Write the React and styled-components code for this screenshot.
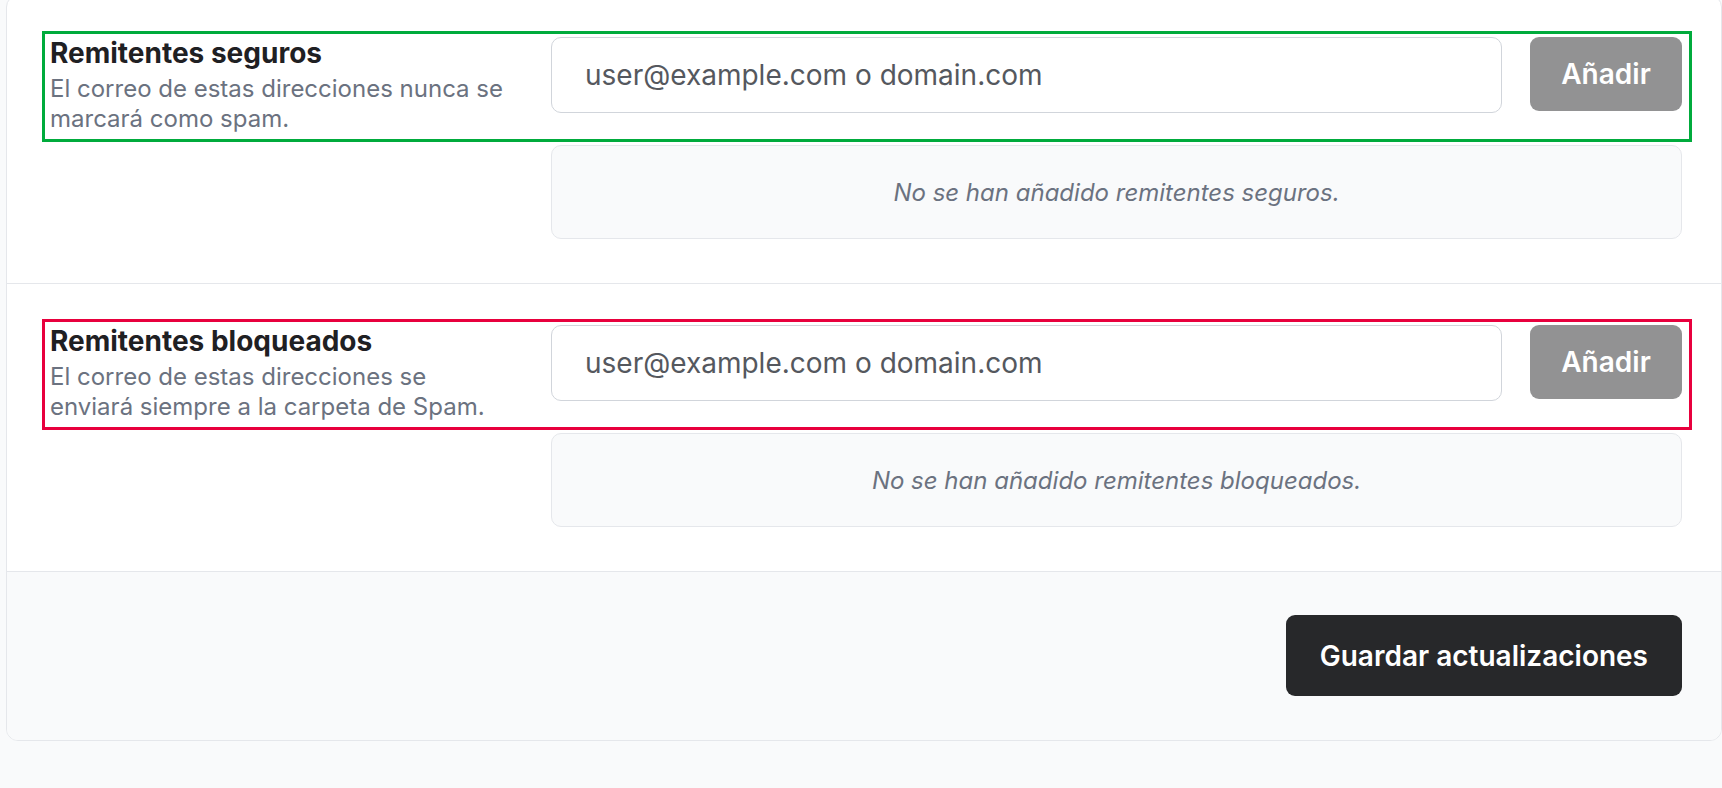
import React from "react";
import styled, { createGlobalStyle } from "styled-components";

const GlobalStyle = createGlobalStyle`
  html, body {
    margin: 0;
    padding: 0;
    background: #f9fafb;
    font-family: Inter, "Noto Sans", sans-serif;
    -webkit-font-smoothing: antialiased;
  }
  * { box-sizing: border-box; }
`;

const Page = styled.div`
  padding: 0 0 0 6px;
  min-height: 788px;
`;

const Card = styled.div`
  margin-top: -5px;
  background: #fff;
  border: 1px solid #e5e7eb;
  border-radius: 12px;
  overflow: hidden;
`;

const Section = styled.section`
  padding: 35px 29px 44px 35px;
  border-bottom: 1px solid #e5e7eb;
`;

const Row = styled.div`
  display: flex;
  align-items: flex-start;
  border: 3px solid ${(p) => p.$outline};
  padding: 3px 7px 5px 5px;
`;

const Label = styled.div`
  flex: 0 0 460px;
  margin-right: 41px;
`;

const Title = styled.h3`
  margin: 0;
  font-size: 28px;
  line-height: 32px;
  font-weight: 700;
  color: #1f2023;
`;

const Hint = styled.p`
  margin: 5px 0 0;
  font-size: 24px;
  line-height: 30px;
  color: #6b7280;
`;

const Input = styled.input`
  flex: 1;
  min-width: 0;
  height: 76px;
  padding: 0 33px;
  border: 1px solid #d1d5db;
  border-radius: 10px;
  background: #fff;
  font: 400 28px Inter, sans-serif;
  color: #1f2023;
  outline: none;

  &::placeholder {
    color: #55585e;
    opacity: 1;
  }
`;

const Button = styled.button`
  border: 0;
  border-radius: 9px;
  background: #27282a;
  color: #fff;
  font-family: Inter, sans-serif;
  font-weight: 600;
  cursor: pointer;

  &:disabled {
    opacity: 0.5;
    cursor: default;
  }
`;

const AddButton = styled(Button)`
  flex: 0 0 152px;
  height: 74px;
  margin-left: 28px;
  font-size: 28px;
`;

const EmptyList = styled.div`
  margin: 3px 10px 0 509px;
  height: 94px;
  display: flex;
  align-items: center;
  justify-content: center;
  background: #f9fafb;
  border: 1px solid #e5e7eb;
  border-radius: 10px;
  font-size: 24px;
  font-style: italic;
  color: #6b7280;
`;

const Footer = styled.div`
  display: flex;
  justify-content: flex-end;
  padding: 43px 39px 44px;
  background: #f9fafb;
`;

const SaveButton = styled(Button)`
  height: 81px;
  padding: 0 34px;
  font-size: 28px;
`;

const lists = [
  {
    key: "safe",
    outline: "#00ab3c",
    title: "Remitentes seguros",
    hint: "El correo de estas direcciones nunca se marcará como spam.",
    empty: "No se han añadido remitentes seguros.",
  },
  {
    key: "blocked",
    outline: "#e8003d",
    title: "Remitentes bloqueados",
    hint: "El correo de estas direcciones se enviará siempre a la carpeta de Spam.",
    empty: "No se han añadido remitentes bloqueados.",
  },
];

const SenderList = ({ outline, title, hint, empty }) => (
  <Section>
    <Row $outline={outline}>
      <Label>
        <Title>{title}</Title>
        <Hint>{hint}</Hint>
      </Label>
      <Input type="text" placeholder="user@example.com o domain.com" />
      <AddButton disabled>Añadir</AddButton>
    </Row>
    <EmptyList>{empty}</EmptyList>
  </Section>
);

export default function App() {
  return (
    <Page>
      <GlobalStyle />
      <Card>
        {lists.map((l) => (
          <SenderList key={l.key} {...l} />
        ))}
        <Footer>
          <SaveButton>Guardar actualizaciones</SaveButton>
        </Footer>
      </Card>
    </Page>
  );
}
